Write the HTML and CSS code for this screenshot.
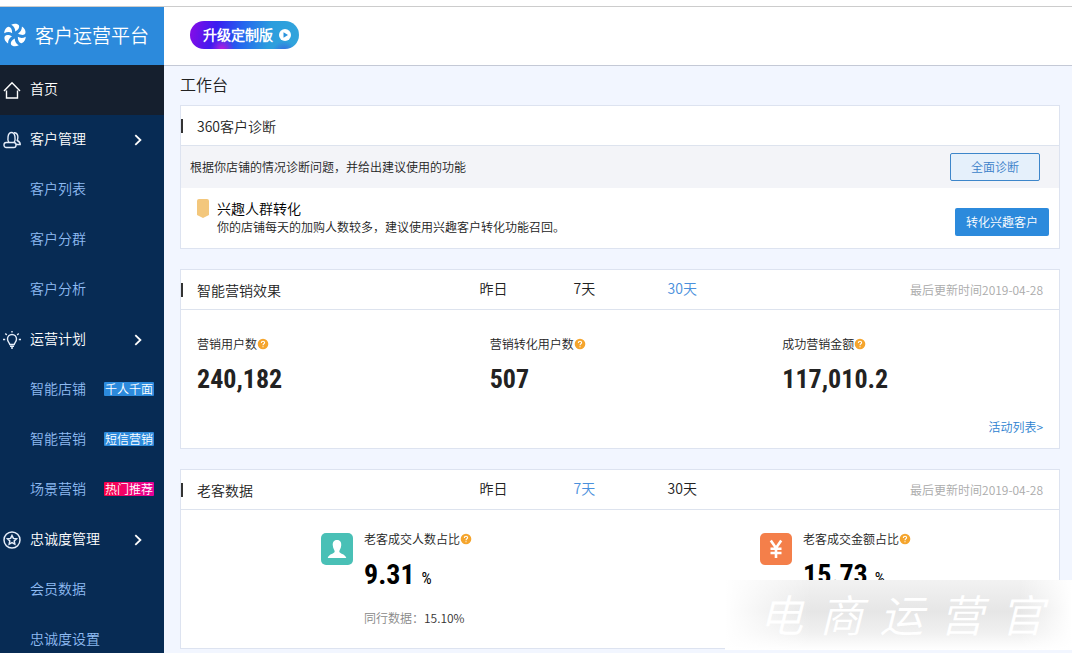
FILE: index.html
```
<!DOCTYPE html>
<html lang="zh-CN">
<head>
<meta charset="utf-8">
<title>客户运营平台</title>
<link rel="stylesheet" href="styles.css">
</head>
<body>
<svg class="defs" aria-hidden="true">
  <symbol id="help" viewBox="0 0 12 12"><circle cx="6" cy="6" r="5.3" fill="#f5a52d"/><path d="M4.3 4.9C4.4 2.6 7.7 2.7 7.6 4.7C7.6 5.8 6 5.8 6 7.2M6 8.2V9.2" fill="none" stroke="#fff" stroke-width="1.1"/></symbol>
  <symbol id="arrow" viewBox="0 0 8 12"><path d="M1.3 1.2L6.4 6L1.3 10.8" fill="none" stroke="#fff" stroke-width="1.8"/></symbol>
</svg>
<div class="topline"></div>
<div class="app">
  <aside class="sidebar">
    <a class="brand" href="#">
      <svg class="brand-logo" viewBox="0 0 24 24" aria-hidden="true">
        <g fill="#fff">
          <path id="blade" d="M8.200 1.800C11 .2 15 .6 16 2.600C16.800 4.600 15.200 7 12.200 8.600C12.400 6 11 3.400 8.200 1.800Z"/>
          <use href="#blade" transform="rotate(60 12 12)"/>
          <use href="#blade" transform="rotate(120 12 12)"/>
          <use href="#blade" transform="rotate(180 12 12)"/>
          <use href="#blade" transform="rotate(240 12 12)"/>
          <use href="#blade" transform="rotate(300 12 12)"/>
        </g>
      </svg>
      <span>客户运营平台</span>
    </a>
    <nav class="menu">
      <a class="item main active" href="#">
        <svg class="icon" viewBox="0 0 18 18" aria-hidden="true"><path d="M1 10L9 1.800L17 10M3.500 9.500V17H14.500V9.500" fill="none" stroke="#fff" stroke-width="1.400"/></svg>
        <span>首页</span>
      </a>
      <a class="item main" href="#">
        <svg class="icon" viewBox="0 0 18 18" aria-hidden="true"><g fill="none" stroke="#e6eefa" stroke-width="1.400"><path d="M5.800 11.500C4.200 9 4.500 1.500 8.500 1.500S12.800 9 11.200 11.500"/><path d="M11 1.800C15 1.500 15.500 6 14.200 9.500C16 10.300 17.300 11 17.200 13.500H13"/><rect x="1" y="11.500" width="12" height="5" rx="2.200"/></g></svg>
        <span>客户管理</span>
        <svg class="chevron"><use href="#arrow"/></svg>
      </a>
      <a class="item" href="#">客户列表</a>
      <a class="item" href="#">客户分群</a>
      <a class="item" href="#">客户分析</a>
      <a class="item main" href="#">
        <svg class="icon" viewBox="0 0 18 18" aria-hidden="true"><g fill="none" stroke="#e6eefa" stroke-width="1.400"><path d="M6.800 13.500C6.600 11.800 4.500 11 4.500 8A4.500 4.500 0 0 1 13.500 8C13.500 11 11.400 11.800 11.200 13.500Z"/><path d="M7 15.200H11M8 17H10M9 0V1.500M0 8.500H2.200M15.800 8.500H18M2.300 2.500L3.800 4M15.700 2.500L14.200 4"/></g></svg>
        <span>运营计划</span>
        <svg class="chevron"><use href="#arrow"/></svg>
      </a>
      <a class="item" href="#">智能店铺<span class="tag">千人千面</span></a>
      <a class="item" href="#">智能营销<span class="tag">短信营销</span></a>
      <a class="item" href="#">场景营销<span class="tag hot">热门推荐</span></a>
      <a class="item main" href="#">
        <svg class="icon" viewBox="0 0 18 18" aria-hidden="true"><g fill="none" stroke="#e6eefa" stroke-width="1.500"><circle cx="9" cy="9" r="8"/><path d="M9 4.500L10.400 7.400L13.500 7.800L11.200 10L11.800 13.200L9 11.700L6.200 13.200L6.800 10L4.500 7.800L7.600 7.400Z"/></g></svg>
        <span>忠诚度管理</span>
        <svg class="chevron"><use href="#arrow"/></svg>
      </a>
      <a class="item" href="#">会员数据</a>
      <a class="item" href="#">忠诚度设置</a>
    </nav>
  </aside>
  <div class="content">
    <header class="header">
      <button class="upgrade" type="button"><span>升级定制版</span>
        <svg class="play" viewBox="0 0 12 12" aria-hidden="true"><circle cx="6" cy="6" r="6" fill="#fff"/><path d="M4.500 3.200L9 6L4.500 8.800Z" fill="#2b93dc"/></svg>
      </button>
    </header>
    <main class="main-area">
      <h1 class="page-title">工作台</h1>

      <section class="card">
        <div class="card-head"><h2>360客户诊断</h2></div>
        <div class="notice">
          <p>根据你店铺的情况诊断问题，并给出建议使用的功能</p>
          <button class="btn outline" type="button">全面诊断</button>
        </div>
        <div class="advice">
          <svg class="ribbon" viewBox="0 0 12 19" aria-hidden="true"><path d="M0 2Q0 0 2 0H10Q12 0 12 2V16L6 19L0 16Z" fill="#f3c77c"/></svg>
          <div class="advice-text">
            <h3>兴趣人群转化</h3>
            <p>你的店铺每天的加购人数较多，建议使用兴趣客户转化功能召回。</p>
          </div>
          <button class="btn solid" type="button">转化兴趣客户</button>
        </div>
      </section>

      <section class="card">
        <div class="card-head">
          <h2>智能营销效果</h2>
          <div class="tabs"><button type="button">昨日</button><button type="button">7天</button><button class="on" type="button">30天</button></div>
          <span class="updated">最后更新时间2019-04-28</span>
        </div>
        <div class="stats">
          <div class="stat"><p class="label">营销用户数<svg class="help"><use href="#help"/></svg></p><strong>240,182</strong></div>
          <div class="stat"><p class="label">营销转化用户数<svg class="help"><use href="#help"/></svg></p><strong>507</strong></div>
          <div class="stat"><p class="label">成功营销金额<svg class="help"><use href="#help"/></svg></p><strong>117,010.2</strong></div>
        </div>
        <div class="more"><a href="#">活动列表&gt;</a></div>
      </section>

      <section class="card">
        <div class="card-head">
          <h2>老客数据</h2>
          <div class="tabs"><button type="button">昨日</button><button class="on" type="button">7天</button><button type="button">30天</button></div>
          <span class="updated">最后更新时间2019-04-28</span>
        </div>
        <div class="ratios">
          <div class="ratio">
            <svg class="badge" viewBox="0 0 32 32" aria-hidden="true"><rect width="32" height="32" rx="5" fill="#49c0b6"/><path d="M16 7C19.500 7 20.500 9.500 20.200 12.500C20 15.500 18.500 17 18.300 18.500C18.200 20.800 24 20.500 25.300 25H6.700C8 20.500 13.800 20.800 13.700 18.500C13.500 17 12 15.500 11.800 12.500C11.500 9.500 12.500 7 16 7Z" fill="#fff"/></svg>
            <div>
              <p class="label">老客成交人数占比<svg class="help"><use href="#help"/></svg></p>
              <p class="percent"><strong>9.31</strong> <span>%</span></p>
              <p class="peer">同行数据：<span>15.10%</span></p>
            </div>
          </div>
          <div class="ratio">
            <svg class="badge" viewBox="0 0 32 32" aria-hidden="true"><rect width="32" height="32" rx="5" fill="#f47f4a"/><path d="M10.800 7.500L16 15L21.200 7.500M16 14V25M10.500 15.800H21.500M10.500 20H21.500" fill="none" stroke="#fff" stroke-width="2.600"/></svg>
            <div>
              <p class="label">老客成交金额占比<svg class="help"><use href="#help"/></svg></p>
              <p class="percent"><strong>15.73</strong> <span>%</span></p>
            </div>
          </div>
        </div>
      </section>
    </main>
  </div>
</div>
<div class="watermark"><span>电</span><span>商</span><span>运</span><span>营</span><span>官</span></div>
</body>
</html>
```
FILE: styles.css
```
* { box-sizing: border-box; }
body {
  margin: 0;
  height: 100vh;
  overflow: hidden;
  position: relative;
  display: flex;
  flex-direction: column;
  background: #fff;
  color: #222;
  font: 350 12px/18px "Noto Sans CJK SC DemiLight", "Noto Sans CJK SC", sans-serif;
}
h1, h2, h3, p { margin: 0; font-weight: inherit; }
a { text-decoration: none; color: inherit; }
button { font: inherit; color: inherit; border: 0; background: none; padding: 0; cursor: pointer; }
.defs { display: none; }
.topline { flex: none; height: 7px; border-bottom: 1px solid #ccc; }
.app { flex: 1; display: flex; min-height: 0; }

.sidebar { flex: none; width: 164px; background: #072b54; overflow: hidden; }
.brand {
  display: flex;
  align-items: center;
  gap: 8px;
  height: 58px;
  padding: 0 0 2px 3px;
  background: #2c8adc;
  color: #fff;
  font-size: 19px;
  font-weight: 300;
  line-height: 28px;
}
.brand-logo { width: 24px; height: 24px; flex: none; }
.brand span { white-space: nowrap; }
.item {
  display: flex;
  align-items: center;
  height: 50px;
  padding: 0 10px 4px 30px;
  color: #8fbbf2;
  font-size: 14px;
  white-space: nowrap;
}
.item.main { padding: 0 22px 0 3px; gap: 9px; color: #fff; font-weight: 400; }
.item.main span { padding-bottom: 4px; }
.item.active { background: #151f2e; }
.icon { width: 18px; height: 18px; flex: none; }
.chevron { width: 8px; height: 12px; margin-left: auto; }
.tag {
  margin: 2px 0 0 auto;
  padding: 0 1px;
  border-radius: 1px;
  background: #2c8adc;
  color: #fff;
  font-size: 12px;
  line-height: 14px;
}
.hot { background: linear-gradient(90deg, #fb0245, #e6029a); }

.content { flex: 1; min-width: 0; background: #f2f6ff; }
.header {
  display: flex;
  align-items: center;
  height: 59px;
  padding: 0 26px 2px;
  background: #fff;
  border-bottom: 1px solid #c4c9d6;
}
.upgrade {
  display: flex;
  align-items: center;
  gap: 6px;
  height: 28px;
  padding: 0 8px 0 13px;
  border-radius: 14px;
  background:
    radial-gradient(circle at 32px 28px, #b51ee0 0, transparent 12px),
    radial-gradient(circle at 94px 32px, #3560e0 0, transparent 12px),
    linear-gradient(100deg, #8a0be6 0, #3a1cf0 24%, #2367ee 48%, #2c9ddd 72%, #32a5dc 100%);
  color: #fff;
  font-size: 14px;
  font-weight: 700;
}
.upgrade span { padding-bottom: 2px; }
.play { width: 12px; height: 12px; }

.main-area { padding: 6px 12px 0 16px; }
.page-title { font-size: 16px; line-height: 24px; margin-bottom: 9px; font-weight: 300; }
.card { background: #fff; border: 1px solid #dde3f0; margin-bottom: 20px; }
.card-head {
  display: grid;
  grid-template-columns: 34% auto 1fr;
  align-items: center;
  height: 40px;
  border-bottom: 1px solid #dde3ee;
}
.card-head h2 {
  padding-left: 14px;
  border-left: 2px solid #333;
  font-size: 14px;
  line-height: 14px;
}
.tabs { display: flex; padding-bottom: 3px; }
.tabs button { width: 94px; text-align: left; font-size: 14px; line-height: 20px; }
.tabs .on { color: #4a90dc; }
.updated { padding-right: 16px; text-align: right; color: #aaa; }
.notice {
  display: flex;
  align-items: center;
  justify-content: space-between;
  height: 42px;
  padding: 0 19px 0 9px;
  background: #f3f4f8;
}
.btn { height: 28px; border-radius: 2px; }
.outline { width: 90px; border: 1px solid #3d86ca; background: #e5f0fb; color: #3b7fc9; }
.solid { width: 94px; background: #2c8adc; color: #fff; font-weight: 400; }
.advice { display: flex; align-items: flex-start; height: 60px; padding: 11px 10px 0 16px; }
.ribbon { width: 12px; height: 19px; }
.advice-text { flex: 1; padding-left: 8px; }
.advice-text h3 { font-size: 14px; line-height: 18px; padding-bottom: 1px; color: #000; }
.advice .btn { margin-top: 9px; }

.label { display: flex; align-items: center; }
.help { width: 12px; height: 12px; }
.stats { display: grid; grid-template-columns: repeat(3, 1fr); padding-top: 25px; }
.stat { padding-left: 16px; }
strong { font-family: "Roboto Condensed", "Liberation Sans Narrow", "Liberation Sans", sans-serif; font-weight: 700; }
.stat strong { display: block; font-size: 26px; line-height: 53px; }
.more { padding: 12px 16px 12px; text-align: right; color: #2c7fd0; }
.ratios { display: grid; grid-template-columns: 1fr 1fr; height: 138px; padding-top: 20px; }
.ratio { display: flex; align-items: flex-start; gap: 11px; padding-left: 140px; }
.badge { width: 32px; height: 32px; margin-top: 3px; }
.percent { display: flex; align-items: baseline; gap: 7px; color: #000; line-height: 54px; }
.percent strong { font-size: 28px; }
.percent span { font-family: "Roboto Condensed", "Liberation Sans Narrow", "Liberation Sans", sans-serif; font-size: 16px; font-weight: 400; }
.peer { color: #888; padding-top: 3px; }
.peer span { color: #333; }

.watermark {
  position: absolute;
  right: 0;
  bottom: 3px;
  width: 347px;
  height: 70px;
  display: flex;
  justify-content: space-between;
  align-items: center;
  padding: 0 28px 4px 34px;
  background:
    linear-gradient(90deg, #fff 0, transparent 25%, transparent 85%, #fff 100%),
    linear-gradient(180deg, #f2f2f2 0, #e6e6e6 45%, #f0f0f0 75%, #fff 100%);
  color: #fff;
  font-size: 44px;
  font-style: italic;
  font-weight: 400;
  line-height: 60px;
}
```
